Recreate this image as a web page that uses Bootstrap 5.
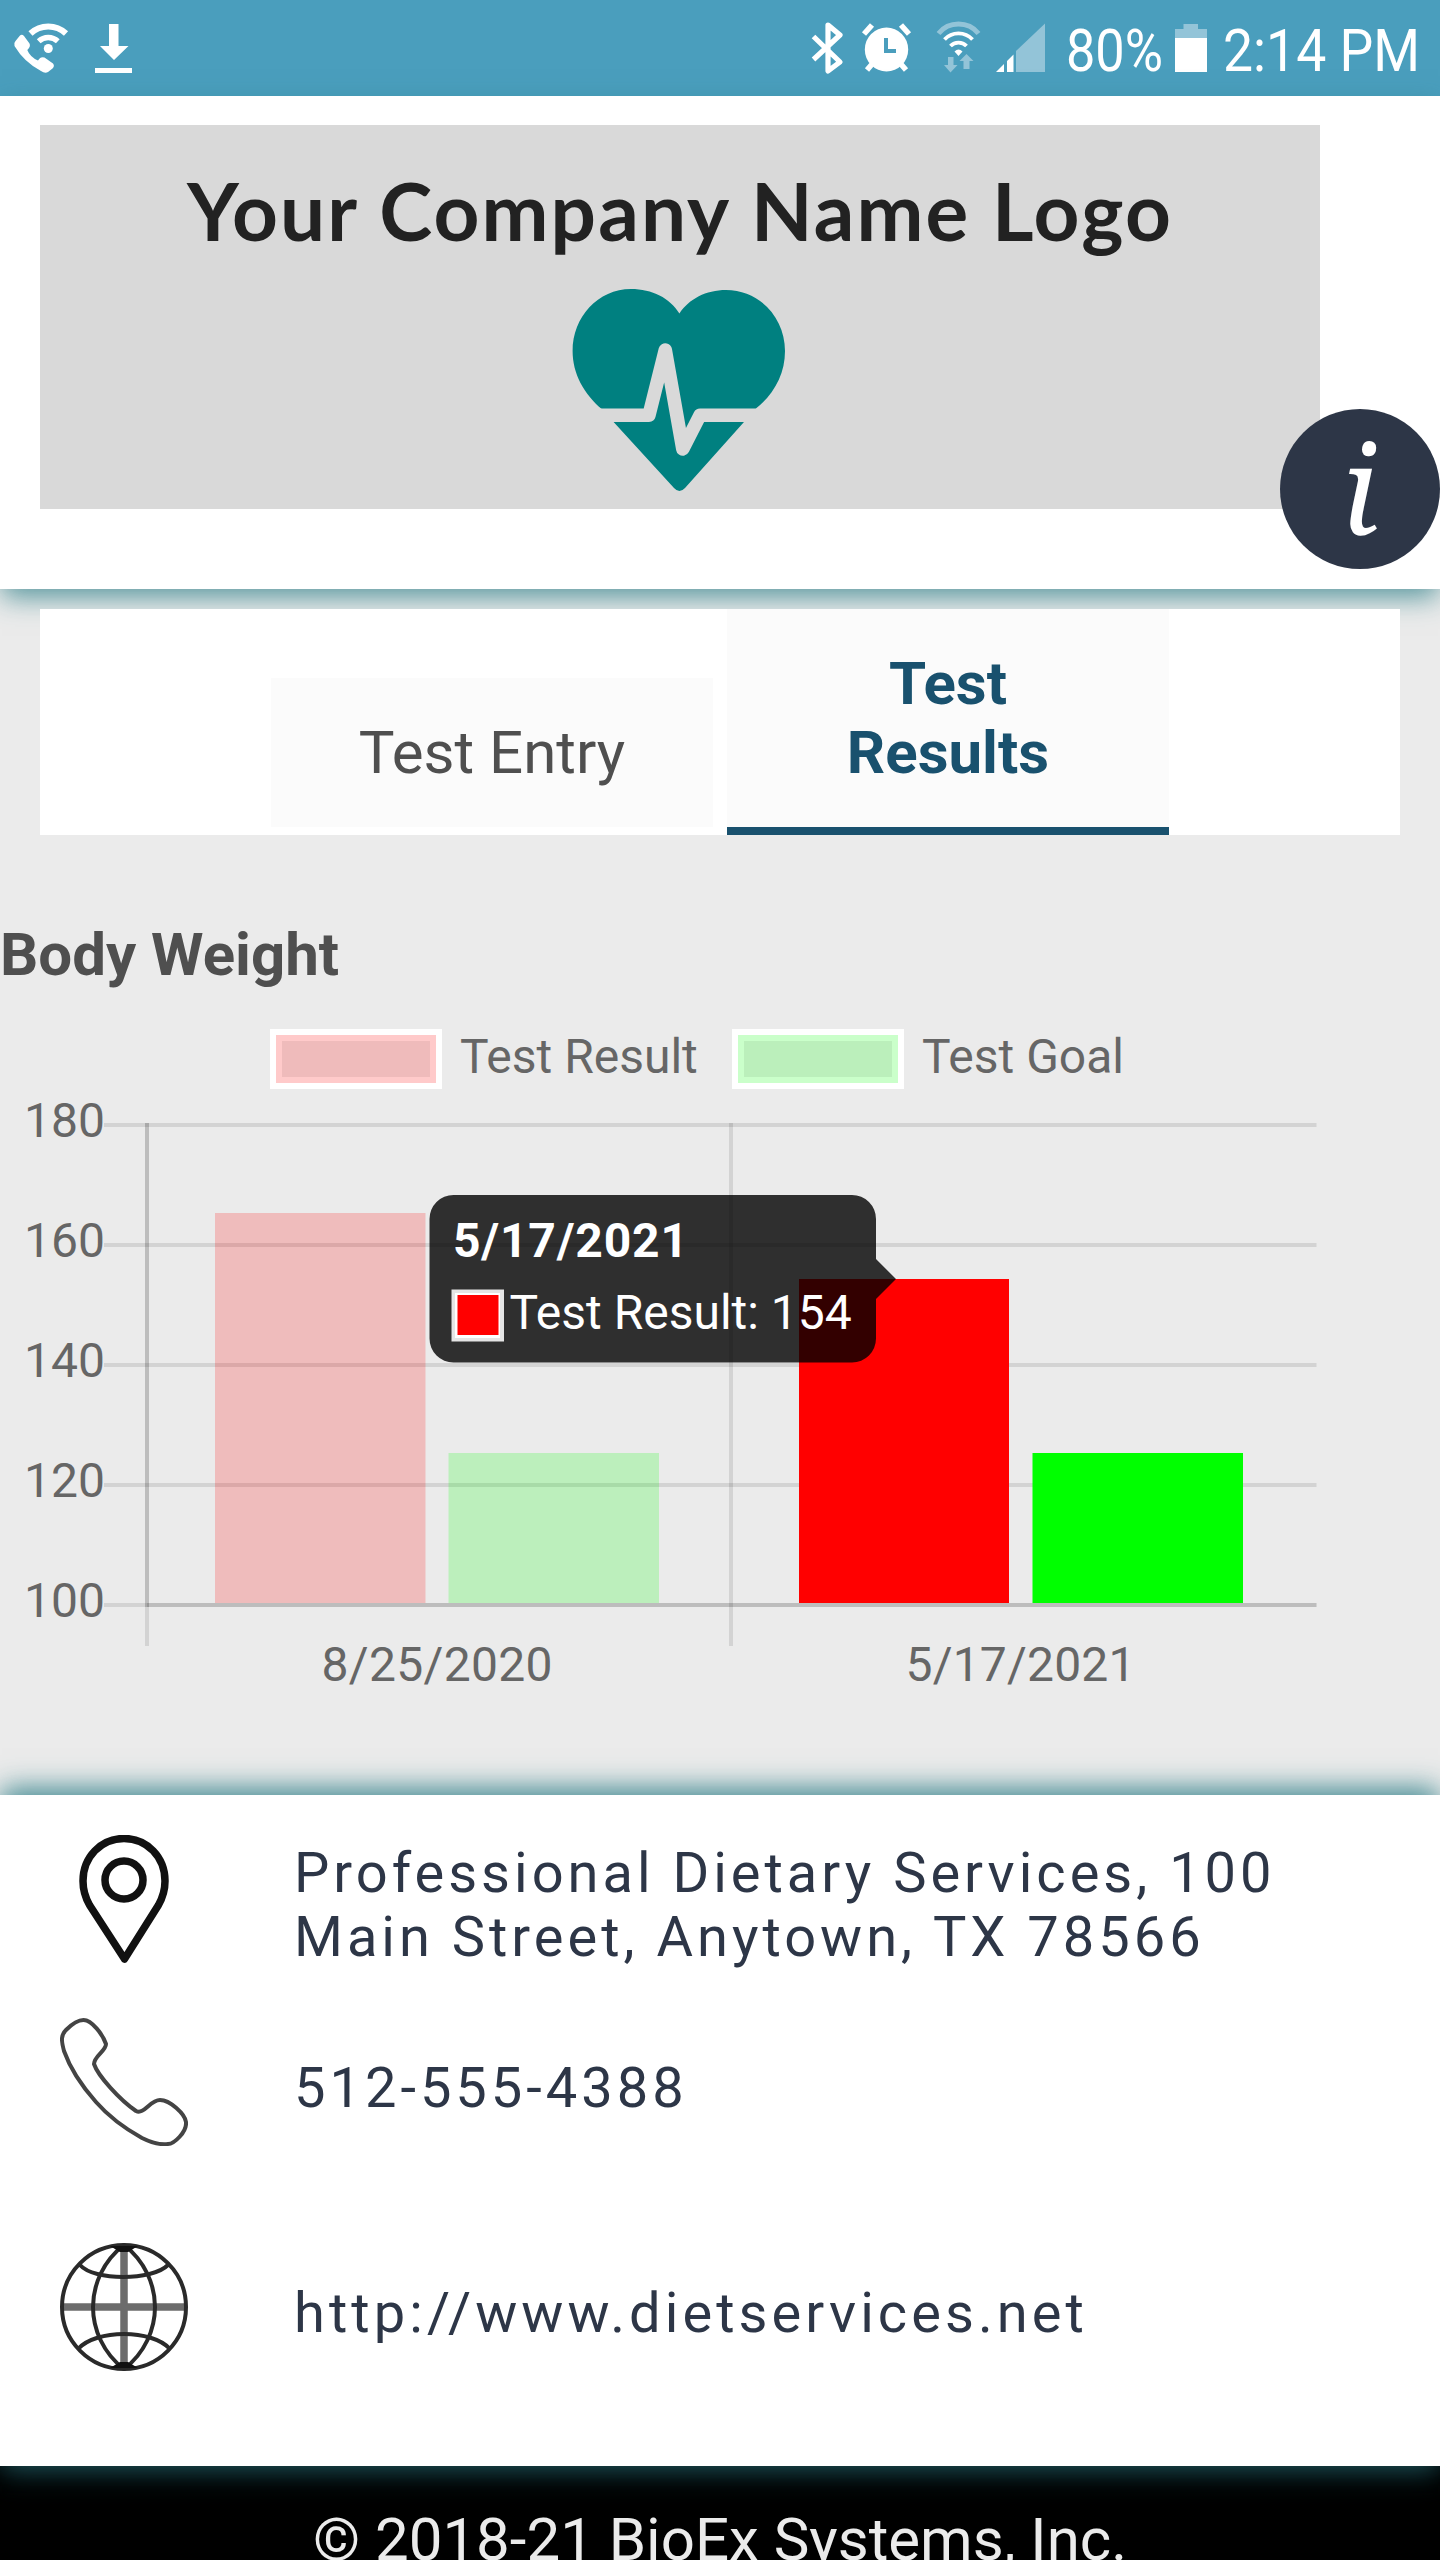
<!DOCTYPE html>
<html lang="en">
<head>
<meta charset="utf-8">
<meta name="viewport" content="width=device-width, initial-scale=1">
<title>Test Results</title>
<link href="https://cdn.jsdelivr.net/npm/bootstrap@5.3.0/dist/css/bootstrap.min.css" rel="stylesheet">
<style>
  html, body { height: 2560px; overflow: hidden; }
  body { font-family: Roboto, "Liberation Sans", sans-serif; background: #000; color: #4f4f4f; }
  svg { display: block; flex: none; }
  svg text { font-family: Roboto, "Liberation Sans", sans-serif; }
  .status-bar { height: 96px; background: #4a9ebd; }
  .page-head { height: 493px; padding: 29px 40px; z-index: 2; box-shadow: 0 10px 26px -2px rgba(43,125,135,.78); }
  .logo-box { width: 1280px; height: 384px; background: #d9d9d9; }
  .logo-box text { font-family: Lato, "Open Sans", sans-serif; }
  .info-btn { right: 0; bottom: 20px; width: 160px; height: 160px; background: #2d3647;
    font: italic 122px/156px "Noto Serif", serif; }
  .page-main { height: 1206px; padding-top: 20px; background: #ebebeb; }
  .tab-strip { height: 226px; margin: 0 40px; gap: 14px; position: relative; z-index: 3; }
  .tab-item { width: 442px; padding: 40px 60px; font-size: 60px; line-height: 69px; color: #4f4f4f;
    background: #fbfbfb; background-clip: padding-box; border-bottom: 8px solid transparent; text-decoration: none; }
  .tab-item.active { color: #19516e; border-color: #19516e; font-weight: 700; }
  .chart-title { font-size: 60px; line-height: 70px; margin: 85px 0 0; color: #4f4f4f; }
  .contact { height: 671px; padding: 34px 60px 0; z-index: 2;
    box-shadow: 0 -10px 26px -2px rgba(43,125,135,.78), 0 10px 26px -2px rgba(43,125,135,.48); }
  .contact-text { margin-left: 106px; padding-top: 12px; font-size: 56px; line-height: 64px; letter-spacing: 4px; color: #2d3647; width: 1040px; }
  .row-phone { margin-top: 49px; }
  .row-web { margin-top: 97px; }
  .row-web .contact-text { letter-spacing: 4.08px; }
  .copyright { padding-top: 39px; font-size: 60px; line-height: 70px; color: #ebebeb; height: 94px; }
</style>
</head>
<body>
<div class="status-bar">
  <svg width="1440" height="96" viewBox="0 0 1440 96" fill="#fff">
    <!-- wifi calling -->
    <path d="M15.500 41 L20 35.500 Q22 34 24 36 L29.500 43.500 Q31 46.500 27.300 50 Q30 57 38 60.500 Q40.500 56 44.500 57.500 L53 63.500 Q55 66 52.500 68.500 L48 72 Q45 74 41 71 Q24 62 14.500 46 Q13.500 43 15.500 41Z"/>
    <circle cx="48.300" cy="48.500" r="4.500"/>
    <path d="M38.700 41.300 A14 14 0 0 1 57.800 41.300" fill="none" stroke="#fff" stroke-width="5.500"/>
    <path d="M30.500 33.500 A26 26 0 0 1 66 33.500" fill="none" stroke="#fff" stroke-width="6"/>
    <!-- download -->
    <path d="M109 24h9.500v22h10L114 60 100 46h9zM95 68h37v5H95z"/>
    <!-- bluetooth -->
    <path d="M813.500 36.500 L840 62 L828 71 V25 L840 35 L813.500 59.500" fill="none" stroke="#fff" stroke-width="5.200" stroke-linejoin="round"/>
    <!-- alarm -->
    <ellipse cx="886.500" cy="49.500" rx="21.700" ry="22"/>
    <path d="M864 34l8-9M909 34l-8-9M867 70l6-7M906 70l-6-7" stroke="#fff" stroke-width="5.500"/>
    <path d="M886 38v13h10" fill="none" stroke="#4a9ebd" stroke-width="4"/>
    <!-- wifi with traffic arrows -->
    <g fill="none" stroke="#fff" stroke-width="3.800">
      <path d="M938.500 33.500 A26 26 0 0 1 978.500 33.500" stroke="#93c4d8" stroke-width="5"/>
      <path d="M944.500 39.500 A19 19 0 0 1 972.500 39.500"/>
      <path d="M950.500 46 A11 11 0 0 1 966.500 46"/>
    </g>
    <path d="M954.500 51.500 Q958.500 47.500 962.500 51.500 L958.500 56Z"/>
    <path d="M948 57h5.500v8h4L950.500 72.500 944 65h4zM963.500 69v-8h-4L966.500 54l7 7h-4v8z" fill="#93c4d8"/>
    <!-- signal -->
    <path d="M1045 23.500V72h-29V51z" fill="#93c4d8"/>
    <path d="M996 72l8-8v8zM1007 61l6.500-6.500V72H1007z"/>
    <text x="1066" y="71" font-size="60" textLength="97" lengthAdjust="spacingAndGlyphs">80%</text>
    <path d="M1175 29h8.500v-5h14.500v5h9v9h-32z" fill="#93c4d8"/>
    <path d="M1175 38h32v34h-32z"/>
    <text x="1223" y="71" font-size="60" textLength="197" lengthAdjust="spacingAndGlyphs">2:14 PM</text>
  </svg>
</div>

<header class="page-head bg-white position-relative">
  <div class="logo-box">
    <svg width="1280" height="384" viewBox="40 125 1280 384">
      <text x="187" y="241" font-size="80" font-weight="700" fill="#222" textLength="984">Your Company Name Logo</text>
      <path d="M679.400 313.500 C670 298 652 289 631 289 C598 289 572.600 317 572.600 351 C572.600 374 584 394 601.700 409 L674 488 Q679.400 494 685 488 L756.500 408 C774 394 785 374 785 351 C785 318 760 290 726 290 C706 290 689 299 679.400 313.500Z" fill="#008080"/>
      <path d="M590 415.200 H649 L665.300 350 L682.800 449 L700 415.200 H770" fill="none" stroke="#d9d9d9" stroke-width="13.500" stroke-linejoin="round"/>
    </svg>
  </div>
  <a class="info-btn position-absolute rounded-circle text-white text-center text-decoration-none" href="#">i</a>
</header>

<main class="page-main">
  <nav class="tab-strip bg-white d-flex justify-content-center align-items-end">
    <a class="tab-item text-center" href="#">Test Entry</a>
    <a class="tab-item active text-center" href="#">Test Results</a>
  </nav>
  <h2 class="chart-title fw-bold">Body Weight</h2>
  <svg width="1440" height="800" viewBox="0 990 1440 800" font-size="48">
    <!-- legend -->
    <rect x="270" y="1029" width="172" height="60" fill="#fff"/>
    <rect x="276" y="1035" width="160" height="48" fill="#ffcaca"/>
    <rect x="282" y="1041" width="148" height="36" fill="#efbbbb"/>
    <rect x="732" y="1029" width="172" height="60" fill="#fff"/>
    <rect x="738" y="1035" width="160" height="48" fill="#caffca"/>
    <rect x="744" y="1041" width="148" height="36" fill="#bbefbb"/>
    <g fill="#666">
      <text x="460" y="1073">Test Result</text>
      <text x="922" y="1073">Test Goal</text>
    </g>
    <!-- grid -->
    <g stroke="#000" stroke-opacity=".1" stroke-width="4">
      <path d="M104 1125H1316.500"/><path d="M104 1245H1316.500"/><path d="M104 1365H1316.500"/><path d="M104 1485H1316.500"/>
      <path d="M104 1605H1316.500"/><path d="M147 1605H1316.500"/>
      <path d="M147 1123V1646"/><path d="M147 1123V1607"/><path d="M731 1123V1646"/>
    </g>
    <g fill="#666" text-anchor="end">
      <text x="105" y="1137">180</text><text x="105" y="1257">160</text><text x="105" y="1377">140</text><text x="105" y="1497">120</text><text x="105" y="1617">100</text>
    </g>
    <g fill="#666">
      <text x="321.500" y="1681" textLength="231">8/25/2020</text><text x="905.500" y="1681" textLength="230">5/17/2021</text>
    </g>
    <!-- bars -->
    <path d="M215 1213h210.500v390H215z" fill="red" fill-opacity=".2"/>
    <path d="M448.500 1453h210.500v150H448.500z" fill="#0f0" fill-opacity=".2"/>
    <path d="M799 1279h210v324H799z" fill="red"/>
    <path d="M1032.500 1453h210.500v150H1032.500z" fill="#0f0"/>
    <!-- tooltip -->
    <path d="M453.500 1195H852a24 24 0 0 1 24 24V1259L896 1279 876 1299V1338.500a24 24 0 0 1 -24 24H453.500a24 24 0 0 1 -24 -24V1219a24 24 0 0 1 24 -24z" fill="#000" fill-opacity=".8"/>
    <g fill="#fff">
      <text x="453" y="1257" font-weight="700" textLength="235">5/17/2021</text>
      <path d="M451.500 1289.500h52.500v52h-52.500z" fill="#e5e5e5"/>
      <path d="M455 1293h45v45h-45z"/>
      <path d="M457.500 1295h41v40h-41z" fill="red"/>
      <text x="509.500" y="1329">Test Result: 154</text>
    </g>
  </svg>
</main>

<section class="contact bg-white position-relative">
  <div class="d-flex align-items-center">
    <svg width="128" height="128" viewBox="0 0 128 128" fill="none" stroke="#111" stroke-width="7.500">
      <path d="M64.500 124 L29.500 70 C25 62 23 54 23 46 C23 22 41 3.500 64 3.500 C87 3.500 105 22 105 46 C105 54 103 62 98.500 70 Z" stroke-linejoin="round"/>
      <circle cx="64" cy="45" r="19"/>
    </svg>
    <div class="contact-text">Professional Dietary Services, 100 Main Street, Anytown, TX 78566</div>
  </div>
  <div class="d-flex align-items-center row-phone">
    <svg width="128" height="128" viewBox="0 0 128 128" fill="none" stroke="#444" stroke-width="4">
      <path d="M23.500 2 C32 2 43 17 46 26 C46 33 34 38 34 46 C38 58 60 82 76 93 C84 97 90 82 100 82 C110 82 125 96 126 104 C127 114 114 126 108 126 C100 127 90 124 82 120 C64 110 50 100 36 84 C20 66 10 50 4 33 C1 22 1 17 6 12 C12 6 17 2 23.500 2Z"/>
    </svg>
    <div class="contact-text">512-555-4388</div>
  </div>
  <div class="d-flex align-items-center row-web">
    <svg width="128" height="128" viewBox="0 0 128 128" fill="none" stroke="#2a2a2a" stroke-width="4">
      <path d="M64 2V126M2 64H126" stroke="#6c6c6c" stroke-width="7.500"/>
      <circle cx="64" cy="64" r="62"/>
      <path d="M64 2C43 18 33 42 33 64S43 110 64 126C85 110 95 86 95 64S85 18 64 2Z"/>
      <path d="M20 22C34 38 92 38 108 22M18 106C36 86 92 86 110 106"/>
      <path d="M50 3H78L68 9H60ZM50 125H78L68 119H60Z" fill="#111" stroke="none"/>
    </svg>
    <div class="contact-text">http://www.dietservices.net</div>
  </div>
</section>

<footer class="copyright text-center overflow-hidden">© 2018-21 BioEx Systems, Inc.</footer>
<script src="https://cdn.jsdelivr.net/npm/bootstrap@5.3.0/dist/js/bootstrap.bundle.min.js"></script>
</body>
</html>
